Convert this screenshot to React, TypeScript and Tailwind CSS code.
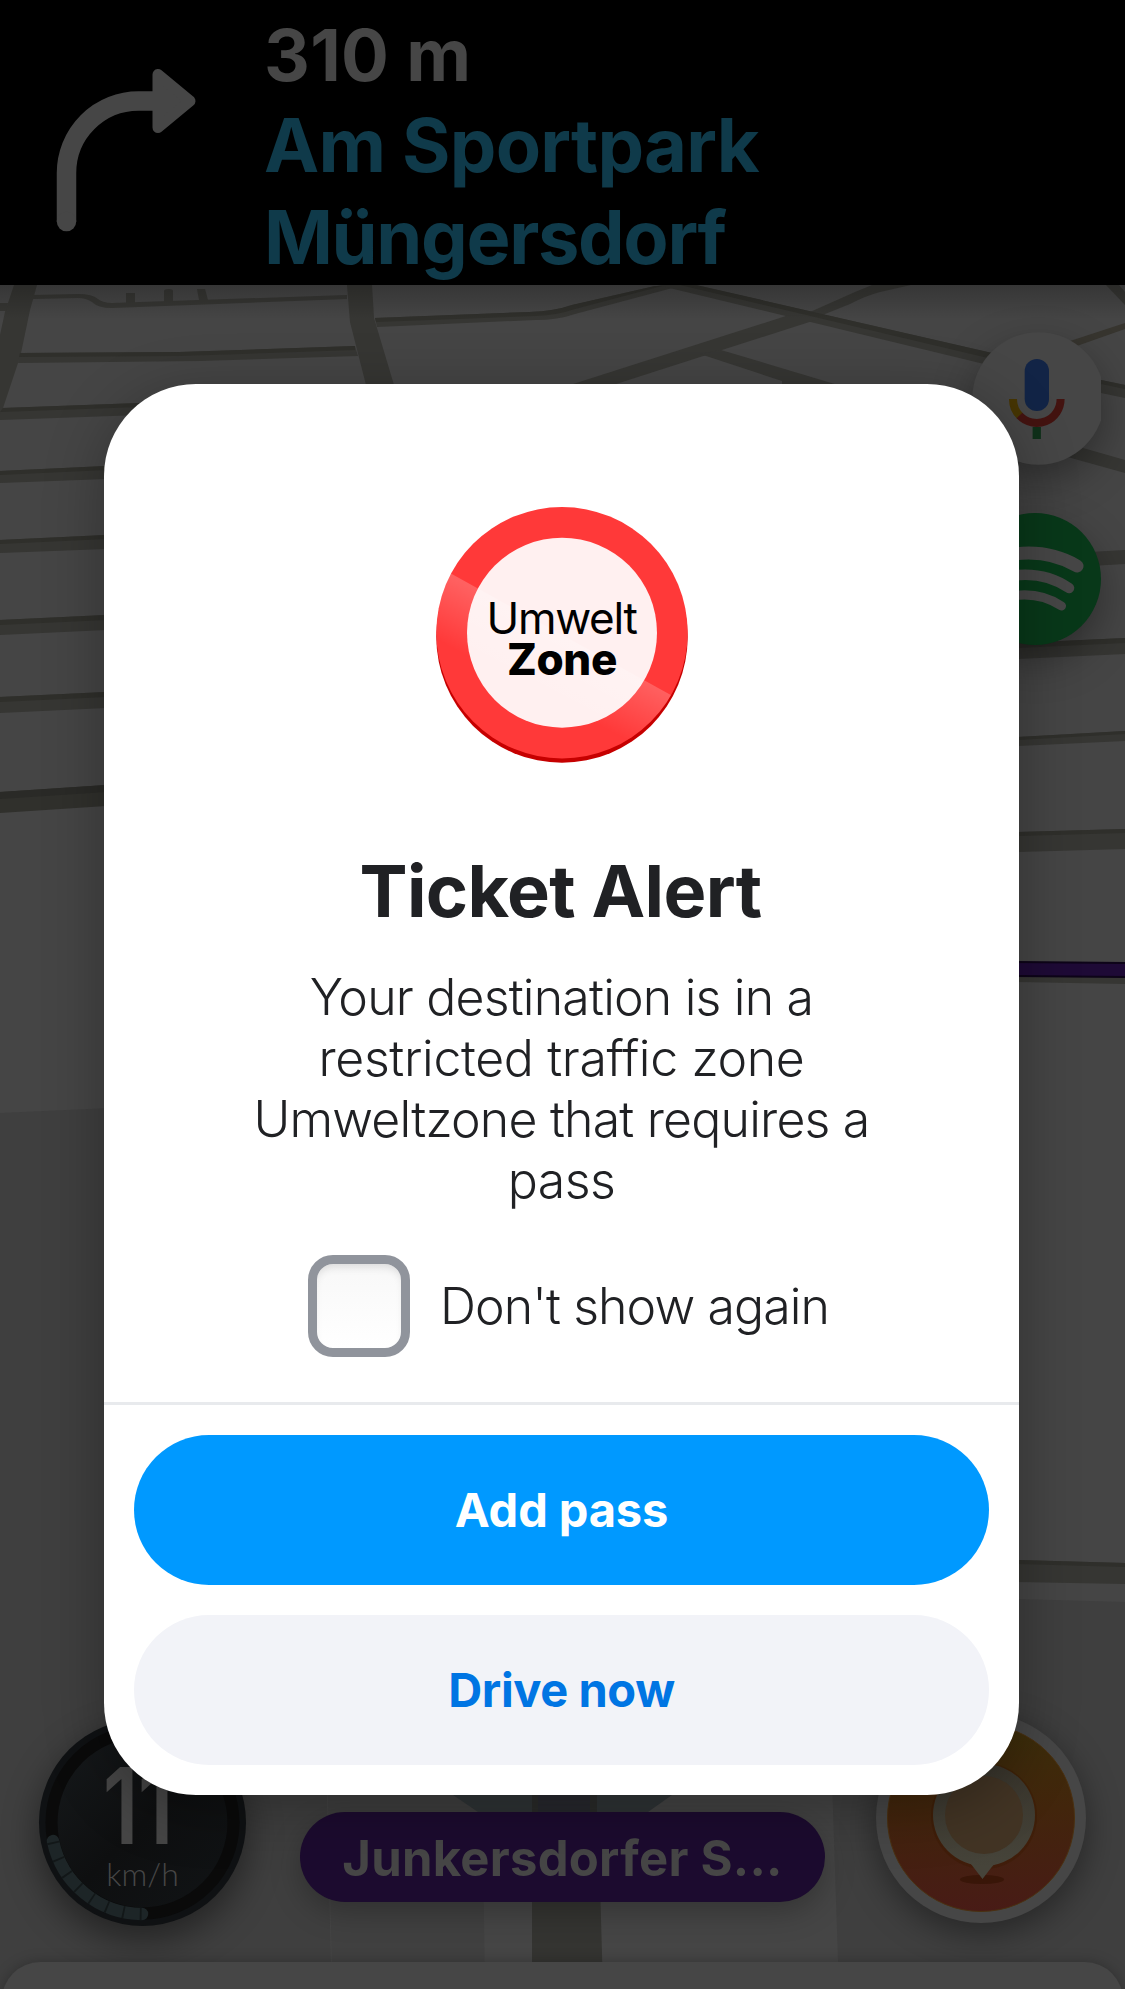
function Road({ d, dark = false }: { d: string; dark?: boolean }) {
  return <path d={d} fill={dark ? "#2f2f2b" : "#363633"} />;
}

const roads = [
  "M14 285H37L30 310L21 353L18 363L3 408L0 418V335L5 312Z",
  "M0 303H8L6 311H0Z",
  "M33 295L78 294Q92 294 98 299Q103 303 112 303L347 295V299L112 308Q98 308 92 302Q86 298 78 298L33 299Z",
  "M126 293H135V303H126ZM164 291Q164 289 169 289Q173 289 173 291V302H164ZM197 289H205L208 300H199Z",
  "M20 353L180 352L355 346L358 356L200 361L18 363Z",
  "M3 408L140 403V415L0 420V414Z",
  "M0 471L106 466V479L0 483Z",
  "M0 540L106 535V549L0 553Z",
  "M0 620L106 615V630L0 635Z",
  "M0 697L106 692V708L0 713Z",
  "M347 285H372L374 318L394 385H366L350 322Z",
  "M375 318L530 312Q555 311 572 305L655 286H680L575 314Q558 320 535 320L377 327Z",
  "M657 285H696L992 353L984 364Z",
  "M911 285L880 292Q865 296 850 304L820 316L810 312L855 292Q865 288 872 285Z",
  "M789 315L825 317L613 385H570Z",
  "M700 354L721 350L838 385H782V381Z",
  "M1106 285H1119L1125 292V305Z",
  "M1101 380L1125 385V398L1101 393Z",
  "M1083 448L1125 460V473L1064 456Z",
  "M1090 552L1125 550V564L1090 566Z",
  "M1018 643L1125 638V654L1018 659Z",
  "M1018 737L1125 731V741L1018 746Z",
  "M1018 832L1125 829V849L1018 852Z",
  "M1018 1560L1125 1563V1584L1018 1582Z",
];

const roadShades = [
  "M20 353L180 352L355 346V350L180 356L19 357Z",
  "M3 408L140 403V407L0 412Z",
  "M0 471L106 466V470L0 475Z",
  "M0 540L106 535V539L0 544Z",
  "M0 620L106 615V620L0 625Z",
  "M0 697L106 692V697L0 702Z",
  "M375 318L530 312Q555 311 572 305L655 286H662L575 309Q558 315 535 316L376 322Z",
  "M680 285H696L992 353L988 358Z",
  "M1018 643L1125 638V643L1018 648Z",
  "M1018 737L1125 731V734L1018 740Z",
  "M1018 832L1125 829V833L1018 836Z",
  "M1018 1560L1125 1563V1567L1018 1564Z",
  "M1101 380L1125 385V389L1101 384Z",
];

function MapCanvas() {
  return (
    <svg className="absolute inset-0" width="1125" height="1989" viewBox="0 0 1125 1989">
      <defs>
        <linearGradient id="topShade" x1="0" y1="0" x2="0" y2="1">
          <stop offset="0" stopColor="#000" stopOpacity="0.22" />
          <stop offset="1" stopColor="#000" stopOpacity="0" />
        </linearGradient>
      </defs>
      <rect width="1125" height="1989" fill="#454545" />
      <path d="M0 1113L110 1108V1760H331V1989H0Z" fill="#3f3f3f" />
      <path d="M327 1780L332 1989H485L482 1780Z" fill="#404040" />
      <path d="M327 1780L332 1989" stroke="#454545" />
      <path d="M1018 1599L1125 1602V1989H839L832 1780H1018Z" fill="#3f3f3f" />
      <path d="M532 1780H597L603 1989H532Z" fill="#343431" />
      <path d="M453 1795L478 1812H648L672 1795Z" fill="#303537" />
      <path d="M532 1795H597V1812H532Z" fill="#2b2c2b" />
      <path d="M538 1795H590V1812H538Z" fill="#28292f" />
      {roads.map((d) => (
        <Road key={d} d={d} />
      ))}
      {roadShades.map((d) => (
        <Road key={d} d={d} dark />
      ))}
      <path d="M0 792L106 785V806L0 813Z" fill="#30302c" />
      <path d="M0 792L106 785V792L0 799Z" fill="#2a2a27" />
      <path d="M1064 343L1125 323V329L1074 347Z" fill="#37352f" />
      <path d="M1018 976L1125 977V984L1018 982Z" fill="#363633" />
      <path d="M1010 962L1135 963V977L1010 976Z" fill="#1e0a36" stroke="#0d0418" strokeWidth="2" />
      <rect y="285" width="1125" height="34" fill="url(#topShade)" />
    </svg>
  );
}

function TurnRightIcon() {
  return (
    <svg className="ml-[50px] mt-[60px] shrink-0" width="150" height="180" viewBox="50 60 150 180">
      <path d="M66.500 221.500V173A72 72 0 0 1 138.500 101H156" fill="none" stroke="#464646" strokeWidth="19.500" />
      <circle cx="66.500" cy="221.500" r="9.750" fill="#464646" />
      <path d="M158 74.500V127.500L190 101Z" fill="#464646" stroke="#464646" strokeWidth="11" strokeLinejoin="round" />
    </svg>
  );
}

function MicButton() {
  return (
    <div className="absolute left-[972px] top-[332px] h-[133px] w-[129px] overflow-hidden">
      <svg width="129" height="133" viewBox="972 332 129 133">
        <circle cx="1038.500" cy="398.500" r="66.200" fill="#464646" />
        <rect x="1024.700" y="359" width="24.300" height="52" rx="12.100" fill="#122446" />
        <path d="M1013 399A23.800 23.800 0 0 0 1020 416" fill="none" stroke="#463503" strokeWidth="8" />
        <path d="M1019.500 415.500A23.800 23.800 0 0 0 1060.600 399" fill="none" stroke="#431310" strokeWidth="8" />
        <rect x="1032.600" y="427" width="8.300" height="12" fill="#0f3019" />
      </svg>
    </div>
  );
}

function SpotifyButton() {
  return (
    <svg className="absolute left-[969px] top-[513px]" width="132" height="132" viewBox="969 513 132 132">
      <circle cx="1035" cy="579" r="66" fill="#083819" />
      <g fill="none" stroke="#464646" strokeLinecap="round">
        <path d="M998 557Q1043 546 1077 566" strokeWidth="13" />
        <path d="M1000 578Q1040 568 1069 588" strokeWidth="10.500" />
        <path d="M1002 598Q1036 589 1061.500 606" strokeWidth="9" />
      </g>
    </svg>
  );
}

function Speedometer() {
  return (
    <div className="absolute left-[39px] top-[1719px] h-[207px] w-[207px] rounded-full bg-[#0f1113] shadow-[0_14px_36px_rgba(0,0,0,0.45)]">
      <svg className="absolute inset-0" width="207" height="207" viewBox="0 0 207 207">
        <defs>
          <linearGradient id="dial" x1="0" y1="0" x2="1" y2="1">
            <stop offset="0.100" stopColor="#15181a" />
            <stop offset="0.500" stopColor="#0e0f10" />
            <stop offset="1" stopColor="#111416" />
          </linearGradient>
        </defs>
        <circle cx="103.500" cy="103.500" r="91" fill="url(#dial)" stroke="#0a0a0a" strokeWidth="12" />
        <path d="M14 122A91.500 91.500 0 0 0 103 195" fill="none" stroke="#1d2527" strokeWidth="12.500" strokeLinecap="round" />
        <path d="M14 122A91.500 91.500 0 0 0 103 195" fill="none" stroke="#121718" strokeWidth="12.500" strokeDasharray="1.800 15.500" strokeDashoffset="-1" />
      </svg>
      <div className="relative flex flex-col items-center">
        <span className="mt-[28px] -ml-[9px] h-[109px] origin-center scale-x-[0.800] font-['Inter'] text-[106px] leading-[118px] font-semibold tracking-[-1px] text-[#464646]">11</span>
        <span className="font-['Lato'] text-[32px] leading-[36px] font-light text-[#464646]">km/h</span>
      </div>
    </div>
  );
}

function ReportButton() {
  return (
    <div className="absolute left-[876px] top-[1713px] h-[210px] w-[210px] rounded-full bg-[#464646] shadow-[0_10px_34px_rgba(0,0,0,0.4)]">
      <svg width="210" height="210" viewBox="876 1713 210 210">
        <defs>
          <linearGradient id="amber" x1="0" y1="0" x2="0" y2="1">
            <stop offset="0" stopColor="#3c2e0a" />
            <stop offset="0.450" stopColor="#42250c" />
            <stop offset="1" stopColor="#481b16" />
          </linearGradient>
          <linearGradient id="pin" x1="0" y1="0" x2="0" y2="1">
            <stop offset="0" stopColor="#39352c" />
            <stop offset="1" stopColor="#46443a" />
          </linearGradient>
        </defs>
        <circle cx="981" cy="1818" r="93.500" fill="url(#amber)" stroke="#4a3010" />
        <ellipse cx="982" cy="1879.500" rx="22" ry="4.500" fill="#331204" opacity="0.700" />
        <circle cx="984" cy="1816" r="53" fill="#3b1904" opacity="0.500" />
        <path d="M969 1862Q972 1865 974 1868L982.500 1879L991 1868Q994 1864 998 1862Z" fill="#46443a" />
        <circle cx="984" cy="1815" r="51" fill="url(#pin)" />
        <circle cx="984" cy="1815" r="39" fill="#423424" />
      </svg>
    </div>
  );
}

function UmweltSign() {
  return (
    <div className="relative mt-[123px] h-[256px] w-[252px]">
      <svg className="absolute inset-0" width="252" height="256" viewBox="436 507 252 256">
        <defs>
          <clipPath id="sign">
            <circle cx="562" cy="632.700" r="125.700" />
          </clipPath>
          <linearGradient id="glare" gradientUnits="userSpaceOnUse" x1="561" y1="635" x2="532" y2="690">
            <stop offset="0" stopColor="#fff" stopOpacity="0.200" />
            <stop offset="1" stopColor="#fff" stopOpacity="0" />
          </linearGradient>
        </defs>
        <circle cx="562" cy="637" r="125.700" fill="#c60000" />
        <circle cx="562" cy="632.700" r="125.700" fill="#ff3939" />
        <circle cx="562" cy="632.700" r="95" fill="#fff0f0" />
        <path clipPath="url(#sign)" d="M430 562L700 711V790H430Z" fill="url(#glare)" />
      </svg>
      <div className="relative flex flex-col items-center pt-[91px] font-['Inter'] leading-[41px] text-black">
        <span className="text-[44px] tracking-[-1.300px]">Umwelt</span>
        <span className="ml-px text-[44px] font-extrabold tracking-[-0.400px]">Zone</span>
      </div>
    </div>
  );
}

function TicketAlert() {
  return (
    <section className="absolute left-[104px] top-[384px] flex h-[1411px] w-[915px] flex-col items-center rounded-[92px] bg-white font-['Inter'] text-[#202124] shadow-[0_12px_60px_rgba(0,0,0,0.3)]">
      <UmweltSign />
      <h1 className="mt-[83px] -ml-[2px] text-[72px] leading-[90px] font-bold tracking-[-0.650px] whitespace-nowrap">Ticket Alert</h1>
      <p className="mt-[31px] flex flex-col items-center text-[50px] leading-[61px] font-light tracking-[-0.800px] whitespace-nowrap">
        <span>Your destination is in a</span>
        <span className="tracking-[-0.350px]">restricted traffic zone</span>
        <span>Umweltzone that requires a</span>
        <span className="tracking-[-0.600px]">pass</span>
      </p>
      <label className="mt-[44px] flex items-center gap-[30px] self-start pl-[204px]">
        <span className="h-[102px] w-[102px] rounded-[25px] border-9 border-[#90949c] bg-linear-to-b from-[#f8f8f8] to-white shadow-[inset_0_6px_8px_-3px_rgba(0,0,0,0.12)]" />
        <span className="text-[50px] leading-[61px] font-light tracking-[-0.900px] whitespace-nowrap">Don't show again</span>
      </label>
      <div className="mt-auto flex w-full flex-col gap-[30px] border-t-3 border-[#e8eaed] p-[30px]">
        <button className="h-[150px] rounded-[75px] bg-[#0099ff] text-[47px] font-bold tracking-[-0.100px] text-white">Add pass</button>
        <button className="h-[150px] rounded-[75px] bg-[#f2f3f8] text-[47px] font-bold tracking-[-0.400px] text-[#0075e3]">Drive now</button>
      </div>
    </section>
  );
}

export default function App() {
  return (
    <main className="relative h-[1989px] w-[1125px] overflow-hidden bg-[#454545] font-['Inter']">
      <MapCanvas />
      <header className="relative flex h-[285px] bg-black">
        <TurnRightIcon />
        <div className="ml-[64px] pt-[11px] font-bold whitespace-nowrap">
          <p className="text-[71px] leading-[88px] tracking-[0.300px] text-[#464646]">310 m</p>
          <p className="text-[74px] leading-[92px] tracking-[-0.750px] text-[#0f3a4a]">Am Sportpark</p>
          <p className="text-[74px] leading-[92px] tracking-[-1.350px] text-[#0f3a4a]">Müngersdorf</p>
        </div>
      </header>
      <div className="absolute left-[975px] top-[335px] size-[126px] rounded-full shadow-[0_16px_44px_rgba(0,0,0,0.4)]" />
      <div className="absolute left-[972px] top-[516px] size-[126px] rounded-full shadow-[0_16px_44px_rgba(0,0,0,0.4)]" />
      <MicButton />
      <SpotifyButton />
      <Speedometer />
      <div className="absolute left-[300px] top-[1812px] flex h-[90px] w-[525px] items-center justify-center rounded-full bg-[#1c0b2f] pt-[3px] text-[49px] font-bold tracking-[0.250px] whitespace-nowrap text-[#464646] shadow-[0_10px_30px_rgba(0,0,0,0.25)]">
        Junkersdorfer S...
      </div>
      <ReportButton />
      <div className="absolute left-[2px] top-[1962px] h-[60px] w-[1121px] rounded-t-[38px] bg-[#464646] shadow-[0_0_14px_rgba(0,0,0,0.25)]" />
      <TicketAlert />
    </main>
  );
}
